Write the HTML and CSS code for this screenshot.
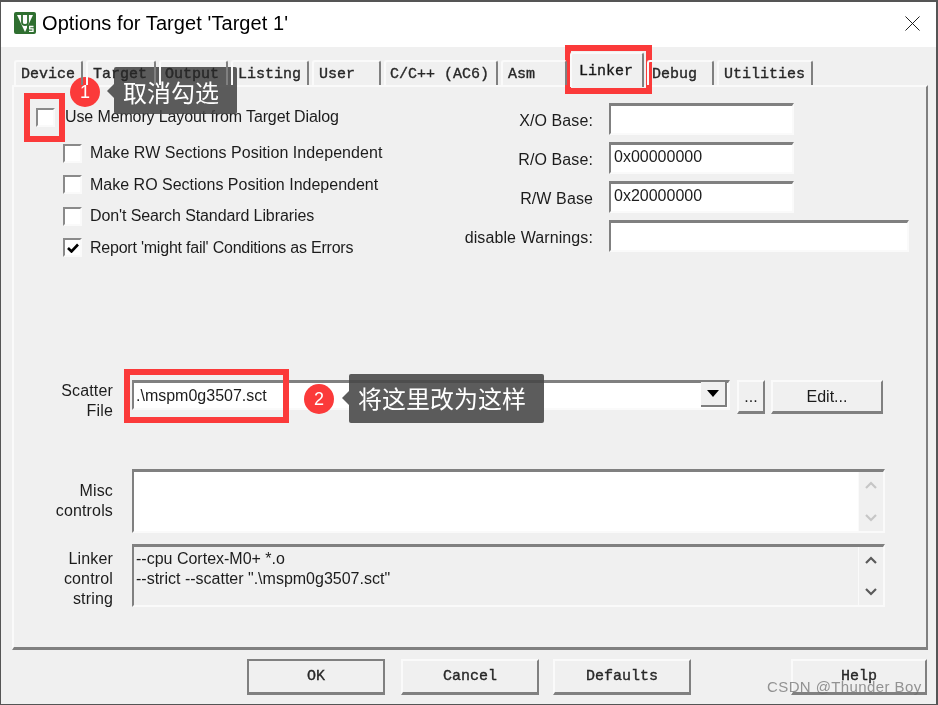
FILE: index.html
```html
<!DOCTYPE html>
<html lang="en">
<head>
<meta charset="utf-8">
<title>Options for Target 'Target 1'</title>
<link rel="stylesheet" href="styles.css">
</head>
<body>
<div class="window">
  <header class="titlebar">
    <svg class="logo" viewBox="0 0 22 22" aria-hidden="true">
      <rect x="0" y="0" width="22" height="22" rx="2" fill="#2f6f30"/>
      <path d="M3 3h16l-8 17z" fill="#fff"/>
      <path d="M8 3v7.500q0 2.500 3 2.500t3-2.500V3" fill="none" stroke="#2f6f30" stroke-width="1.800"/>
      <rect x="13" y="12.500" width="8" height="8.500" rx="1" fill="#2f6f30"/>
      <path d="M19.500 14.500h-3.800v2.300h3.300v2.500h-4" fill="none" stroke="#fff" stroke-width="1.300"/>
    </svg>
    <span class="title">Options for Target 'Target 1'</span>
    <svg class="close" viewBox="0 0 16 16" aria-hidden="true"><path d="M.5.500l15 15M15.500.500l-15 15" stroke="#111" stroke-width="1" fill="none"/></svg>
  </header>
  <main class="client">
    <nav class="tabs">
      <span class="tab t-device">Device</span>
      <span class="tab t-target">Target</span>
      <span class="tab t-output">Output</span>
      <span class="tab t-listing">Listing</span>
      <span class="tab t-user">User</span>
      <span class="tab t-cc">C/C++ (AC6)</span>
      <span class="tab t-asm">Asm</span>
      <span class="tab tab-active t-linker">Linker</span>
      <span class="tab t-debug">Debug</span>
      <span class="tab t-util">Utilities</span>
    </nav>
    <section class="panel">
      <div class="top">
        <div class="checks">
          <label class="check check-first"><i class="box"></i>Use Memory Layout from Target Dialog</label>
          <label class="check check-wide"><i class="box"></i>Make RW Sections Position Independent</label>
          <label class="check"><i class="box"></i>Make RO Sections Position Independent</label>
          <label class="check check-narrow"><i class="box"></i>Don't Search Standard Libraries</label>
          <label class="check check-tight"><i class="box box-on"><svg viewBox="0 0 12 10"><path d="M1 5l3.500 3.500L11 1.500" fill="none" stroke="#000" stroke-width="2.600"/></svg></i>Report 'might fail' Conditions as Errors</label>
        </div>
        <div class="bases">
          <span class="base-label">X/O Base:</span><span class="field"></span>
          <span class="base-label">R/O Base:</span><span class="field">0x00000000</span>
          <span class="base-label">R/W Base</span><span class="field">0x20000000</span>
          <span class="base-label">disable Warnings:</span><span class="field field-wide"></span>
        </div>
      </div>
      <div class="row row-scatter">
        <span class="row-label">Scatter<br>File</span>
        <div class="combo">
          <span class="combo-text">.\mspm0g3507.sct</span>
          <span class="combo-btn"><i class="caret"></i></span>
        </div>
        <button class="btn btn-dots">...</button>
        <button class="btn btn-edit">Edit...</button>
      </div>
      <div class="row row-misc">
        <span class="row-label">Misc<br>controls</span>
        <div class="memo">
          <div class="memo-text"></div>
          <div class="scroll scroll-off">
            <svg viewBox="0 0 12 8"><path d="M1 7l5-5 5 5" fill="none" stroke="currentColor" stroke-width="2.200"/></svg>
            <svg viewBox="0 0 12 8"><path d="M1 1l5 5 5-5" fill="none" stroke="currentColor" stroke-width="2.200"/></svg>
          </div>
        </div>
      </div>
      <div class="row row-linker">
        <span class="row-label">Linker<br>control<br>string</span>
        <div class="memo memo-ro">
          <div class="memo-text">--cpu Cortex-M0+ *.o<br>--strict --scatter ".\mspm0g3507.sct"</div>
          <div class="scroll">
            <svg viewBox="0 0 12 8"><path d="M1 7l5-5 5 5" fill="none" stroke="currentColor" stroke-width="2.200"/></svg>
            <svg viewBox="0 0 12 8"><path d="M1 1l5 5 5-5" fill="none" stroke="currentColor" stroke-width="2.200"/></svg>
          </div>
        </div>
      </div>
    </section>
    <footer class="actions">
      <button class="action a-ok">OK</button>
      <button class="action a-cancel">Cancel</button>
      <button class="action a-defaults">Defaults</button>
      <button class="action a-help">Help</button>
    </footer>
  </main>

  <div class="mark mark-check"></div>
  <div class="mark mark-linker"></div>
  <div class="mark mark-scatter"></div>
  <span class="badge badge-1">1</span>
  <div class="tip tip-1">取消勾选</div>
  <span class="badge badge-2">2</span>
  <div class="tip tip-2">将这里改为这样</div>
  <span class="watermark">CSDN @Thunder Boy</span>
</div>
</body>
</html>
```

FILE: styles.css
```css
* { box-sizing: border-box; }
html, body { margin: 0; padding: 0; }
body { width: 938px; height: 705px; overflow: hidden; background: #f0f0f0; }

.window {
  position: relative;
  width: 938px;
  height: 705px;
  display: flex;
  flex-direction: column;
  border: 1px solid #555;
  border-right-width: 2px;
  border-top-width: 2px;
  font-family: "Liberation Sans", Arial, sans-serif;
  font-size: 16px;
  color: #1c1c1c;
  filter: blur(.3px);
}

.titlebar {
  height: 45px;
  flex: none;
  background: #fff;
  display: flex;
  align-items: center;
  padding: 0 16px 0 13px;
}
.logo { width: 22px; height: 22px; flex: none; margin-top: -3px; }
.title { margin-left: 6px; font-size: 20px; letter-spacing: .07px; color: #000; margin-top: -2px; }
.close { width: 15px; height: 15px; margin-left: auto; margin-top: -2px; }

.client { flex: 1; display: flex; flex-direction: column; background: #f0f0f0; padding-left: 10px; min-height: 0; }

.tabs {
  display: flex;
  gap: 3px;
  height: 25px;
  margin-top: 13px;
  padding-left: 3px;
  position: relative;
  z-index: 1;
  font-family: "Liberation Mono", monospace;
  font-size: 15px;
  -webkit-text-stroke: .35px #222;
}
.tab {
  height: 25px;
  padding: 4px 0 0 5px;
  border-top: 2px solid #fafafa;
  border-left: 2px solid #fafafa;
  border-right: 2px solid #808080;
  border-radius: 3px 3px 0 0;
  color: #2a2a2a;
  white-space: nowrap;
}
.t-device { width: 69px; }
.t-target { width: 70px; }
.t-output { width: 69px; padding-left: 4px; }
.t-listing { width: 78px; }
.t-user { width: 69px; }
.t-cc { width: 114px; padding-left: 4px; }
.t-asm { width: 66px; }
.t-linker { width: 74px; }
.t-debug { width: 67px; padding-left: 3px; }
.t-util { width: 96px; }
.tab-active {
  height: 35px;
  margin-top: -8px;
  padding: 9px 0 0 7px;
  background: #f0f0f0;
  color: #111;
}

.panel {
  width: 916px;
  height: 565px;
  flex: none;
  display: flex;
  flex-direction: column;
  border-top: 2px solid #fafafa;
  border-left: 2px solid #fafafa;
  border-right: 2px solid #808080;
  border-bottom: 3px solid #808080;
  margin-left: 1px;
}

.top { display: flex; margin-top: 16px; height: 149px; }
.checks { width: 449px; padding-left: 22px; display: flex; flex-direction: column; }
.check {
  display: flex;
  flex: none;
  align-items: center;
  height: 20px;
  margin: 0 0 11.500px 27px;
  white-space: nowrap;
}
.check-first { margin: 4px 0 16px 0; letter-spacing: -.12px; }
.check-wide { letter-spacing: .05px; }
.check-narrow { letter-spacing: -.1px; }
.check-tight { letter-spacing: -.22px; }
.box {
  width: 19px;
  height: 19px;
  flex: none;
  margin-right: 8px;
  background: #fff;
  border: 2px solid #fafafa;
  border-top-color: #8a8a8a;
  border-left-color: #8a8a8a;
  display: flex;
  align-items: center;
  justify-content: center;
}
.check-first .box { margin-right: 10px; }
.box svg { width: 12px; height: 10px; }

.bases {
  display: grid;
  grid-template-columns: 130px 185px 115px;
  grid-auto-rows: 32px;
  row-gap: 7px;
  column-gap: 16px;
  align-items: center;
}
.base-label { white-space: nowrap; letter-spacing: .1px; grid-column: 1; justify-self: end; margin-top: 4px; }
.field {
  grid-column: 2;
  height: 32px;
  background: #fff;
  border: 2px solid #fafafa;
  border-top: 3px solid #808080;
  border-left: 2px solid #808080;
  padding: 2px 0 0 3px;
  line-height: 20px;
}
.field-wide { grid-column: 2 / 4; width: 300px; }

.row { display: flex; }
.row-label { width: 99px; flex: none; text-align: right; line-height: 20px; letter-spacing: .15px; }
.row-scatter { margin-top: 128px; height: 34px; }
.row-scatter .row-label { padding-top: 1px; }
.row-misc { margin-top: 55px; height: 64px; }
.row-misc .row-label { padding-top: 12px; }
.row-linker { margin-top: 11px; height: 63px; }
.row-linker .row-label { padding-top: 5px; }

.combo {
  margin-left: 19px;
  width: 598px;
  height: 30px;
  background: #fff;
  border: 2px solid #fafafa;
  border-top: 3px solid #808080;
  border-left: 2px solid #808080;
  display: flex;
  align-items: center;
  justify-content: space-between;
  padding-right: 1px;
}
.combo-text { padding-left: 2px; margin-top: 1px; }
.combo-btn {
  width: 26px;
  height: 25px;
  margin: -2px 0 0;
  background: #f0f0f0;
  border-right: 2px solid #808080;
  border-bottom: 2px solid #808080;
  display: flex;
  align-items: center;
  justify-content: center;
}
.caret { width: 0; height: 0; border: 6px solid transparent; border-top: 7px solid #000; border-bottom: 0; }

.btn, .action {
  background: #f0f0f0;
  border: 2px solid #fafafa;
  border-right-color: #808080;
  border-bottom: 3px solid #808080;
  padding: 0;
  color: #1c1c1c;
}
.btn { font: 16px "Liberation Sans", sans-serif; }
.btn-dots { margin-left: 7px; width: 28px; height: 34px; }
.btn-edit { margin-left: 6px; width: 112px; height: 34px; }

.memo {
  margin-left: 19px;
  width: 753px;
  display: flex;
  border: 2px solid #fafafa;
  border-top: 3px solid #808080;
  border-left: 2px solid #808080;
  background: #fff;
}
.memo-ro { background: #f0f0f0; }
.memo-text { flex: 1; padding: 2px 0 0 2px; line-height: 20px; }
.scroll {
  width: 25px;
  flex: none;
  background: #f0f0f0;
  border-left: 1px solid #fafafa;
  display: flex;
  flex-direction: column;
  align-items: center;
  justify-content: space-between;
  padding: 9px 0;
  color: #5a5a5a;
}
.scroll-off { color: #c6c6c6; }
.scroll svg { width: 12px; height: 8px; }

.actions {
  display: flex;
  margin-top: 9px;
  padding-left: 236px;
}
.action {
  height: 36px;
  width: 138px;
  font: 15px "Liberation Mono", monospace;
  -webkit-text-stroke: .35px #222;
  color: #2a2a2a;
}
.a-ok { border-color: #808080; border-width: 2px 2px 3px 2px; }
.a-cancel { margin-left: 16px; }
.a-defaults { margin-left: 14px; }
.a-help { margin-left: 100px; width: 136px; }

/* Annotations drawn over the dialog */
.mark { position: absolute; border: 6.500px solid #fb3a3a; }
.mark-check { left: 23px; top: 91px; width: 41px; height: 49px; }
.mark-linker { left: 564px; top: 43px; width: 87px; height: 49px; }
.mark-scatter { left: 123px; top: 367px; width: 165px; height: 54px; }
.badge {
  position: absolute;
  width: 30px;
  height: 30px;
  border-radius: 50%;
  background: #fb3a3a;
  color: #fff;
  font-size: 18px;
  line-height: 30px;
  text-align: center;
}
.badge-1 { left: 69px; top: 75px; }
.badge-2 { left: 303px; top: 382px; }
.tip {
  position: absolute;
  background: rgba(70, 70, 70, .88);
  color: #fff;
  font-family: "Noto Sans CJK SC", sans-serif;
  font-size: 24px;
  padding: 0 9px;
  border-radius: 2px;
  white-space: nowrap;
}
.tip::before {
  content: "";
  position: absolute;
  left: -7px;
  top: 17px;
  border: 7px solid transparent;
  border-left: 0;
  border-right-color: rgba(70, 70, 70, .88);
}
.tip-1 { left: 113px; top: 65px; width: 123px; height: 47px; line-height: 50px; }
.tip-2 { left: 348px; top: 372px; width: 195px; height: 49px; line-height: 48px; }
.watermark {
  position: absolute;
  left: 766px;
  top: 676px;
  font-size: 15px;
  letter-spacing: .4px;
  color: rgba(110, 110, 110, .72);
  white-space: nowrap;
}
```
